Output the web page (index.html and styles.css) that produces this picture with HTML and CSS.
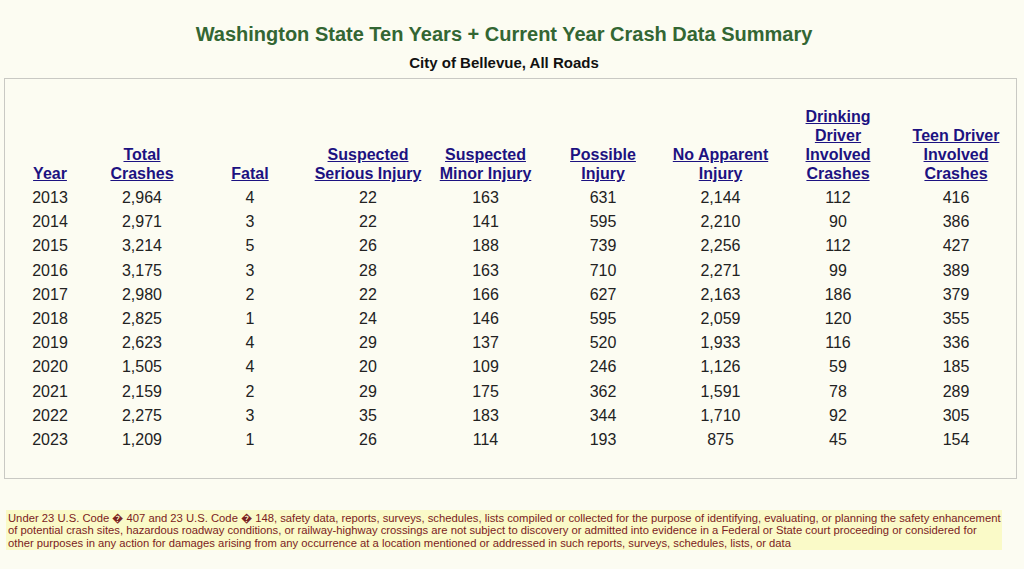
FILE: index.html
```html
<!DOCTYPE html>
<html lang="en">
<head>
<meta charset="utf-8">
<title>Washington State Crash Data Summary</title>
<link rel="stylesheet" href="styles.css">
</head>
<body>
<div class="page">
  <header class="heading">
    <h1 class="title">Washington State Ten Years + Current Year Crash Data Summary</h1>
    <p class="subtitle">City of Bellevue, All Roads</p>
  </header>
  <section class="panel">
    <table class="crash-table">
      <colgroup>
        <col class="c-year"><col class="c-total"><col class="c-std"><col class="c-std"><col class="c-narrow"><col class="c-std"><col class="c-narrow"><col class="c-std"><col class="c-std">
      </colgroup>
      <thead>
        <tr>
          <th><a href="#">Year</a></th>
          <th><a href="#">Total<br>Crashes</a></th>
          <th><a href="#">Fatal</a></th>
          <th><a href="#">Suspected<br>Serious Injury</a></th>
          <th><a href="#">Suspected<br>Minor Injury</a></th>
          <th><a href="#">Possible<br>Injury</a></th>
          <th><a href="#">No Apparent<br>Injury</a></th>
          <th><a href="#">Drinking<br>Driver<br>Involved<br>Crashes</a></th>
          <th><a href="#">Teen Driver<br>Involved<br>Crashes</a></th>
        </tr>
      </thead>
      <tbody>
        <tr><td>2013</td><td>2,964</td><td>4</td><td>22</td><td>163</td><td>631</td><td>2,144</td><td>112</td><td>416</td></tr>
        <tr><td>2014</td><td>2,971</td><td>3</td><td>22</td><td>141</td><td>595</td><td>2,210</td><td>90</td><td>386</td></tr>
        <tr><td>2015</td><td>3,214</td><td>5</td><td>26</td><td>188</td><td>739</td><td>2,256</td><td>112</td><td>427</td></tr>
        <tr><td>2016</td><td>3,175</td><td>3</td><td>28</td><td>163</td><td>710</td><td>2,271</td><td>99</td><td>389</td></tr>
        <tr><td>2017</td><td>2,980</td><td>2</td><td>22</td><td>166</td><td>627</td><td>2,163</td><td>186</td><td>379</td></tr>
        <tr><td>2018</td><td>2,825</td><td>1</td><td>24</td><td>146</td><td>595</td><td>2,059</td><td>120</td><td>355</td></tr>
        <tr><td>2019</td><td>2,623</td><td>4</td><td>29</td><td>137</td><td>520</td><td>1,933</td><td>116</td><td>336</td></tr>
        <tr><td>2020</td><td>1,505</td><td>4</td><td>20</td><td>109</td><td>246</td><td>1,126</td><td>59</td><td>185</td></tr>
        <tr><td>2021</td><td>2,159</td><td>2</td><td>29</td><td>175</td><td>362</td><td>1,591</td><td>78</td><td>289</td></tr>
        <tr><td>2022</td><td>2,275</td><td>3</td><td>35</td><td>183</td><td>344</td><td>1,710</td><td>92</td><td>305</td></tr>
        <tr><td>2023</td><td>1,209</td><td>1</td><td>26</td><td>114</td><td>193</td><td>875</td><td>45</td><td>154</td></tr>
      </tbody>
    </table>
  </section>
  <p class="disclaimer">Under 23 U.S. Code &#xFFFD; 407 and 23 U.S. Code &#xFFFD; 148, safety data, reports, surveys, schedules, lists compiled or collected for the purpose of identifying, evaluating, or planning the safety enhancement<br>of potential crash sites, hazardous roadway conditions, or railway-highway crossings are not subject to discovery or admitted into evidence in a Federal or State court proceeding or considered for<br>other purposes in any action for damages arising from any occurrence at a location mentioned or addressed in such reports, surveys, schedules, lists, or data</p>
</div>
</body>
</html>
```

FILE: styles.css
```css
html, body {
  margin: 0;
  padding: 0;
  background: #fcfcf2;
}

body {
  font-family: "Liberation Sans", Arial, sans-serif;
  color: #222;
}

.page {
  padding-top: 23px;
}

.heading {
  width: 1008px;
  text-align: center;
}

.title {
  margin: 0;
  font-size: 20px;
  font-weight: bold;
  color: #336633;
  line-height: normal;
}

.subtitle {
  margin: 8px 0 0;
  font-size: 15px;
  font-weight: bold;
  color: #111;
  line-height: normal;
}

.panel {
  box-sizing: border-box;
  width: 1013px;
  margin: 7px 0 0 4px;
  border: 1px solid #c9c9c4;
  padding: 28px 0 26px 2px;
}

.crash-table {
  width: 1008px;
  table-layout: fixed;
  border-collapse: collapse;
  font-size: 16px;
}

.c-year { width: 86px; }
.c-total { width: 98px; }
.c-std { width: 118px; }
.c-narrow { width: 117px; }

.crash-table th {
  padding: 0 0 3px;
  line-height: 19px;
  font-weight: bold;
  text-align: center;
  vertical-align: bottom;
}

.crash-table th a {
  color: #1c1281;
  text-decoration: underline;
}

.crash-table td {
  padding: 0;
  height: 24.2px;
  line-height: 24.2px;
  text-align: center;
  color: #222;
}

.disclaimer {
  box-sizing: border-box;
  width: 996px;
  margin: 31px 0 0 6px;
  padding: 2px 0 1px 2px;
  background: #fafac8;
  color: #7a2222;
  font-size: 11.25px;
  line-height: 12.2px;
}
```
